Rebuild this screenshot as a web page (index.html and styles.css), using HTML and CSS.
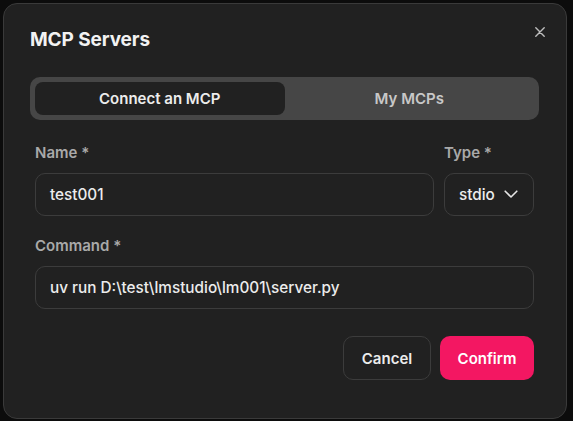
FILE: index.html
```html
<!DOCTYPE html>
<html>
<head>
<meta charset="utf-8">
<link rel="stylesheet" href="styles.css">
</head>
<body>
<div class="dialog">
  <div class="head">
    <h1 class="title">MCP Servers</h1>
    <button class="close" aria-label="Close">
      <svg width="10" height="10" viewBox="0 0 10 10"><path d="M0.8 0.8L9.2 9.2M9.2 0.8L0.8 9.2" stroke="#bdbdbd" stroke-width="1.4" stroke-linecap="round"/></svg>
    </button>
  </div>
  <div class="tabs">
    <div class="tab active">Connect an MCP</div>
    <div class="tab">My MCPs</div>
  </div>
  <div class="form">
    <div class="row">
      <div class="field grow">
        <label class="label">Name *</label>
        <div class="input">test001</div>
      </div>
      <div class="field">
        <label class="label">Type *</label>
        <div class="input select">stdio
          <svg width="14" height="9" viewBox="0 0 14 9"><path d="M1.2 1.2L7 7L12.8 1.2" stroke="#e6e6e6" stroke-width="1.6" fill="none" stroke-linecap="round" stroke-linejoin="round"/></svg>
        </div>
      </div>
    </div>
    <div class="field">
      <label class="label">Command *</label>
      <div class="input">uv run D:\test\lmstudio\lm001\server.py</div>
    </div>
    <div class="actions">
      <button class="btn cancel">Cancel</button>
      <button class="btn confirm">Confirm</button>
    </div>
  </div>
</div>
</body>
</html>
```
FILE: styles.css
```css
html, body {
  margin: 0;
  padding: 0;
  background: #0c0c0c;
  font-family: Inter, "Noto Sans", sans-serif;
  overflow: hidden;
}
.dialog {
  box-sizing: border-box;
  margin: 3px 0 0 3px;
  width: 564px;
  height: 416px;
  background: #212121;
  border: 1px solid #3a3a3a;
  border-radius: 14px;
  padding: 22px 27px 0 26px;
}
.head {
  display: flex;
  justify-content: space-between;
  align-items: flex-start;
  height: 51px;
}
.title {
  margin: 2px 0 0 0;
  font-size: 19px;
  font-weight: 700;
  color: #f2f2f2;
  line-height: 24px;
  letter-spacing: -0.1px;
}
.close {
  background: none;
  border: 0;
  padding: 0;
  margin: 1px -6px 0 0;
  width: 10px;
  height: 10px;
  display: flex;
}
.tabs {
  display: grid;
  grid-template-columns: 1fr 1fr;
  background: #464646;
  border-radius: 10px;
  padding: 5px;
  height: 43px;
  box-sizing: border-box;
}
.tab {
  display: flex;
  align-items: center;
  justify-content: center;
  font-size: 15px;
  font-weight: 600;
  color: #c8c8c8;
  border-radius: 8px;
}
.tab.active {
  background: #212121;
  color: #ececec;
}
.form {
  padding: 24px 5px 0 5px;
  display: flex;
  flex-direction: column;
  gap: 21px;
}
.row {
  display: flex;
  gap: 10px;
}
.field {
  display: flex;
  flex-direction: column;
  gap: 11px;
}
.grow { flex: 1; }
.label {
  font-size: 15px;
  font-weight: 600;
  color: #a9a9a9;
  line-height: 18px;
}
.input {
  box-sizing: border-box;
  height: 43px;
  border: 1px solid #3c3c3c;
  border-radius: 10px;
  padding: 0 14px;
  display: flex;
  align-items: center;
  font-size: 15.3px;
  color: #ececec;
  font-weight: 500;
}
.select {
  width: 90px;
  gap: 9px;
}
.actions {
  display: flex;
  justify-content: flex-end;
  gap: 9px;
  margin-top: 6px;
}
.btn {
  box-sizing: border-box;
  height: 44px;
  border-radius: 10px;
  font-family: Inter, "Noto Sans", sans-serif;
  font-size: 15px;
  font-weight: 600;
  padding: 0 17px;
}
.cancel {
  background: #212121;
  border: 1px solid #3c3c3c;
  color: #ececec;
  width: 88px;
}
.confirm {
  background: #f31762;
  border: 0;
  color: #ffffff;
  width: 94px;
}
```
